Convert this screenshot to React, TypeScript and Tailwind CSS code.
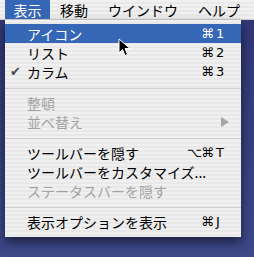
import React from "react"

type Item =
  | { kind: "sep" }
  | {
      kind: "item"
      label: string
      mods?: string
      keyChar?: string
      checked?: boolean
      disabled?: boolean
      active?: boolean
      submenu?: boolean
    }

const items: Item[] = [
  { kind: "item", label: "アイコン", mods: "⌘", keyChar: "1", active: true },
  { kind: "item", label: "リスト", mods: "⌘", keyChar: "2" },
  { kind: "item", label: "カラム", mods: "⌘", keyChar: "3", checked: true },
  { kind: "sep" },
  { kind: "item", label: "整頓", disabled: true },
  { kind: "item", label: "並べ替え", disabled: true, submenu: true },
  { kind: "sep" },
  { kind: "item", label: "ツールバーを隠す", mods: "⌥⌘", keyChar: "T" },
  { kind: "item", label: "ツールバーをカスタマイズ..." },
  { kind: "item", label: "ステータスバーを隠す", disabled: true },
  { kind: "sep" },
  { kind: "item", label: "表示オプションを表示", mods: "⌘", keyChar: "J" },
]

const jp = "font-['Lucida_Grande','Noto_Sans_CJK_JP',sans-serif]"
const sym = "font-['DejaVu_Sans','Noto_Sans_CJK_JP',sans-serif]"

function MenuRow({ item }: { item: Item }) {
  if (item.kind === "sep") {
    return (
      <div className="h-[12px] pt-[7px]">
        <div className="h-px w-full bg-[#cfcfcf]" />
      </div>
    )
  }

  const color = item.active
    ? "text-white"
    : item.disabled
      ? "text-[#a3a3a3]"
      : "text-black"

  return (
    <div
      className={`flex items-center h-[19px] pr-[11px] ${color} ${
        item.active ? "bg-[#3666b6]" : ""
      }`}
    >
      <span className={`w-[22px] pl-[5px] text-[13px] text-[#4a4a4a] ${sym}`}>
        {item.checked ? "✔" : ""}
      </span>
      <span className={`flex-1 text-[14px] leading-none whitespace-nowrap ${jp}`}>
        {item.label}
      </span>
      {item.submenu && (
        <svg width="8" height="10" viewBox="0 0 8 10" className="mr-[1px]">
          <polygon points="0,0 8,5 0,10" fill="#a6a6a6" />
        </svg>
      )}
      {item.keyChar && (
        <>
          <span className={`w-[40px] text-right text-[13px] leading-none tracking-[-1px] ${sym}`}>
            {item.mods}
          </span>
          <span className={`w-[14px] ml-[3px] text-[13px] leading-none ${sym}`}>
            {item.keyChar}
          </span>
        </>
      )}
    </div>
  )
}

export default function App() {
  const bar = ["表示", "移動", "ウインドウ", "ヘルプ"]

  return (
    <div className="relative w-[254px] h-[257px] overflow-hidden bg-[linear-gradient(to_bottom,#2f3672,#3d4889)]">
      <div className="h-[20px] flex items-stretch bg-[repeating-linear-gradient(to_bottom,#f1f1f1_0px,#f1f1f1_2px,#e9e9e9_2px,#e9e9e9_4px)] border-b border-[#d0d0d0]">
        <div className="w-[5px]" />
        {bar.map((label, i) => (
          <div
            key={label}
            className={`flex items-center text-[14px] leading-none ${jp} ${
              i === 0
                ? "bg-[#3666b6] text-white w-[45px] justify-center"
                : "text-black px-[10px]"
            }`}
          >
            {label}
          </div>
        ))}
      </div>

      <div className="ml-[5px] w-[236px] pt-[4px] pb-[6px] bg-[repeating-linear-gradient(to_bottom,#f0f0f0_0px,#f0f0f0_2px,#e8e8e8_2px,#e8e8e8_4px)] shadow-[0_5px_10px_rgba(0,0,0,0.55)]">
        {items.map((item, i) => (
          <MenuRow key={i} item={item} />
        ))}
      </div>

      {/* mouse pointer */}
      <svg
        width="13"
        height="19"
        viewBox="0 0 13 19"
        className="absolute left-[118px] top-[38px]"
      >
        <path
          d="M1 1 L1 15 L4.5 11.5 L7 17.5 L9.5 16.5 L7 10.5 L12 10.5 Z"
          fill="#000"
          stroke="#fff"
          strokeWidth="1"
          strokeLinejoin="round"
        />
      </svg>
    </div>
  )
}
